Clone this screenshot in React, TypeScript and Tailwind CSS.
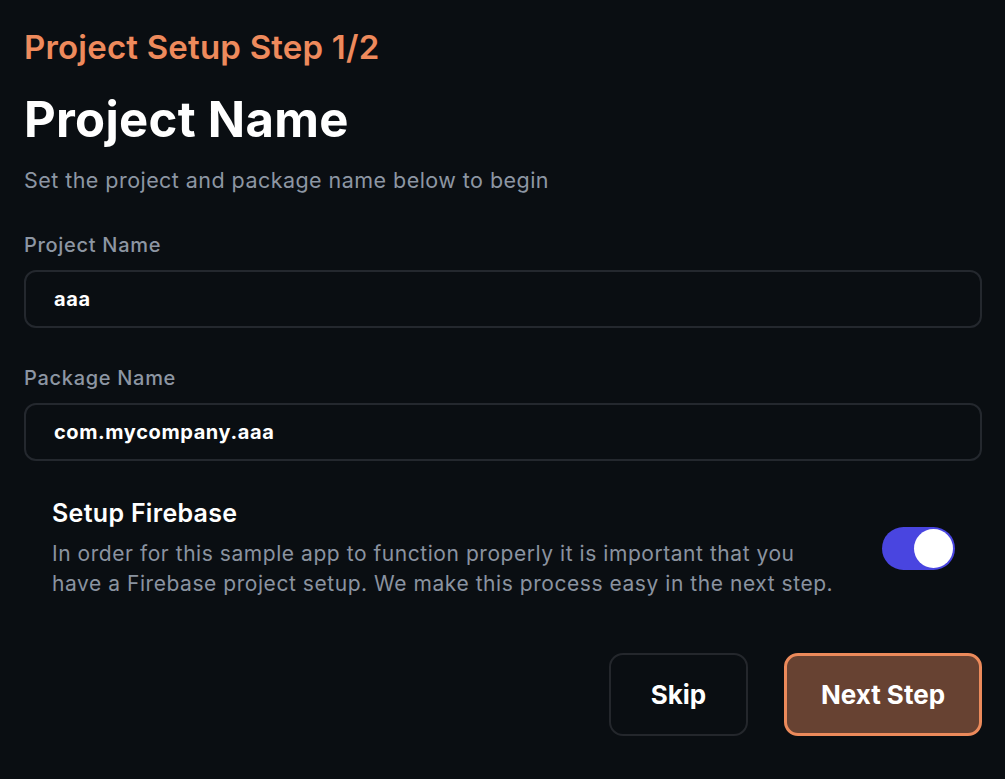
export default function App() {
  return (
    <div
      className="min-h-[779px] w-full bg-[#0a0e12] pl-6 pr-[23px] pt-[27px]"
      style={{ fontFamily: "Inter, 'Noto Sans', sans-serif" }}
    >
      <div className="text-[33px] font-semibold leading-[40px] tracking-[0.2px] text-[#ee8a5c]">
        Project Setup Step 1/2
      </div>
      <h1 className="mt-[25px] text-[49px] font-bold leading-[56px] tracking-[0.3px] text-white">
        Project Name
      </h1>
      <p className="mt-[18px] text-[21.5px] leading-[28px] tracking-[0.45px] text-[#8d96a3]">
        Set the project and package name below to begin
      </p>

      <label className="mt-[38px] block text-[20px] font-medium leading-[26px] tracking-[0.7px] text-[#8d96a3]">
        Project Name
      </label>
      <div className="mt-[12px] flex h-[58px] items-center rounded-[12px] border-2 border-[#24282e] px-[28px]">
        <span className="text-[20px] font-bold tracking-[0.6px] text-white">aaa</span>
      </div>

      <label className="mt-[37px] block text-[20px] font-medium leading-[26px] tracking-[0.7px] text-[#8d96a3]">
        Package Name
      </label>
      <div className="mt-[12px] flex h-[58px] items-center rounded-[12px] border-2 border-[#24282e] px-[28px]">
        <span className="text-[20px] font-bold tracking-[0.6px] text-white">com.mycompany.aaa</span>
      </div>

      <div className="mt-[36px] flex items-center justify-between pl-7 pr-[27px]">
        <div>
          <div className="text-[25px] font-semibold leading-[32px] tracking-[0.3px] text-white">
            Setup Firebase
          </div>
          <p className="mt-[10px] text-[21px] leading-[30px] tracking-[0.55px] text-[#8a93a0]">
            In order for this sample app to function properly it is important that you
            <br />
            have a Firebase project setup. We make this process easy in the next step.
          </p>
        </div>
        <div className="flex h-[43px] w-[73px] items-center justify-end rounded-full bg-[#4945e0] pr-[2px]">
          <div className="h-[39px] w-[39px] rounded-full bg-white" />
        </div>
      </div>

      <div className="mt-[54px] flex justify-end gap-[36px]">
        <button className="h-[83px] w-[139px] rounded-[14px] border-2 border-[#24272c] text-[26px] font-bold text-white">
          Skip
        </button>
        <button className="h-[83px] w-[198px] rounded-[14px] border-[3px] border-[#ec8a5b] bg-[#674232] text-[26px] font-bold text-white">
          Next Step
        </button>
      </div>
    </div>
  );
}
